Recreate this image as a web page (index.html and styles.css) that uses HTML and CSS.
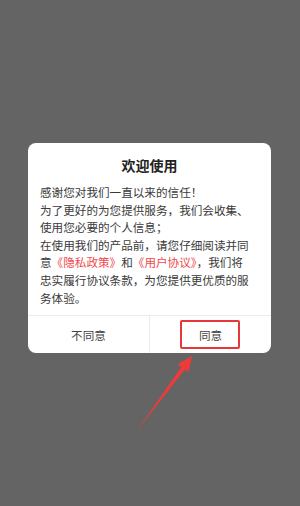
FILE: index.html
```html
<!DOCTYPE html>
<html lang="zh">
<head>
<meta charset="utf-8">
<link rel="stylesheet" href="styles.css">
</head>
<body>
<div class="screen">
  <div class="dialog">
    <div class="title">欢迎使用</div>
    <div class="content">
      <p>感谢您对我们一直以来的信任！</p>
      <p>为了更好的为您提供服务，我们会收集、使用您必要的个人信息；</p>
      <p>在使用我们的产品前，请您仔细阅读并同意<span class="link">《隐私政策》</span>和<span class="link">《用户协议》</span>，我们将忠实履行协议条款，为您提供更优质的服务体验。</p>
    </div>
    <div class="actions">
      <div class="btn">不同意</div>
      <div class="btn agree">同意<span class="highlight"></span></div>
    </div>
  </div>
  <svg class="arrow" width="300" height="506" viewBox="0 0 300 506">
    <polygon points="136,432 181.3,367.1 177.6,364.3 192,356 188.4,372 184.8,369.4" fill="#f03a3a"/>
  </svg>
</div>
</body>
</html>
```
FILE: styles.css
```css
html, body {
  margin: 0;
  padding: 0;
}
body {
  background: #646464;
  font-family: "Noto Sans CJK SC", "Noto Sans", sans-serif;
}
.screen {
  position: relative;
  width: 300px;
  height: 506px;
  padding-top: 143px;
  box-sizing: border-box;
  overflow: hidden;
}
.dialog {
  width: 243px;
  margin-left: 28px;
  background: #fff;
  border-radius: 8px;
  display: flex;
  flex-direction: column;
}
.title {
  padding-top: 12px;
  height: 20px;
  line-height: 20px;
  text-align: center;
  font-size: 14px;
  font-weight: bold;
  color: #222;
}
.content {
  width: 211px;
  padding: 9px 0 8px 12px;
  font-size: 11.6px;
  line-height: 17.6px;
  color: #3a3a3a;
}
.content p {
  margin: 0;
}
.link {
  color: #f0484b;
}
.actions {
  display: flex;
  border-top: 1px solid #ececec;
  height: 37px;
}
.btn {
  flex: 1;
  display: flex;
  align-items: center;
  justify-content: center;
  font-size: 11.6px;
  color: #444;
  position: relative;
}
.btn + .btn {
  border-left: 1px solid #ececec;
}
.highlight {
  position: absolute;
  left: 30px;
  top: 4px;
  width: 60px;
  height: 29px;
  box-sizing: border-box;
  border: 2px solid #e8373b;
  border-radius: 2px;
}
.arrow {
  position: absolute;
  left: 0;
  top: 0;
}
```
